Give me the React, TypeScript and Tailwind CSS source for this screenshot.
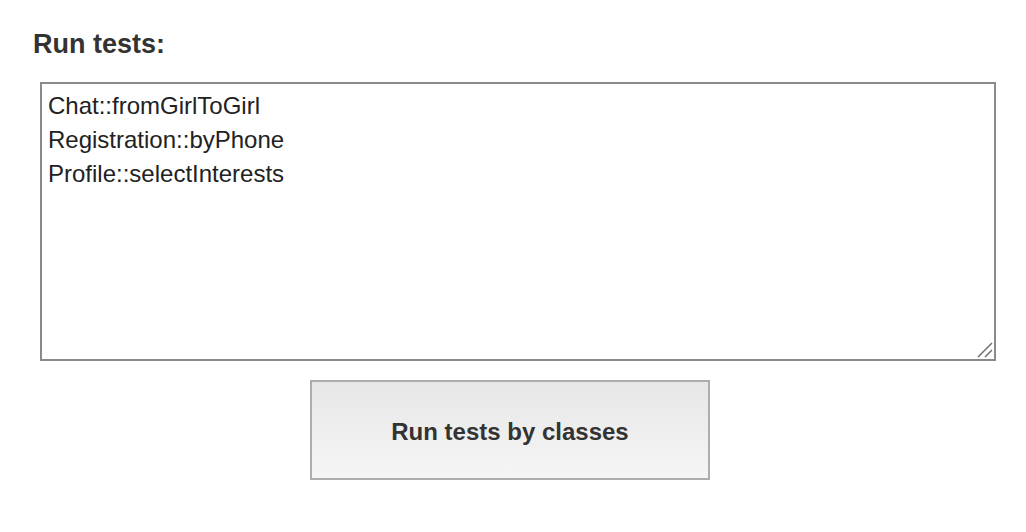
import React from "react";

const tests = ["Chat::fromGirlToGirl", "Registration::byPhone", "Profile::selectInterests"];

export default function App() {
  return (
    <div className="min-h-[532px] w-[1026px] bg-white font-['Liberation_Sans',Arial,sans-serif] text-[#333]">
      <div className="px-[33px] pt-[27px]">
        <h2 className="text-[27px] font-bold leading-[34px]">Run tests:</h2>
      </div>
      <div className="mt-[21px] pl-[40px]">
        <div className="relative h-[279px] w-[956px]">
          <textarea
            readOnly
            defaultValue={tests.join("\n")}
            className="block h-full w-full resize-none border-2 border-[#8a8a8a] bg-white px-[6px] pt-[5px] text-[24px] leading-[34px] text-[#222] outline-none"
          />
          {/* resize grip */}
          <svg className="pointer-events-none absolute bottom-[3px] right-[3px]" width="16" height="16" viewBox="0 0 16 16">
            <line x1="1" y1="15" x2="15" y2="1" stroke="#6b6b6b" strokeWidth="1.5" />
            <line x1="8" y1="15" x2="15" y2="8" stroke="#6b6b6b" strokeWidth="1.5" />
          </svg>
        </div>
      </div>
      <div className="mt-[19px] pl-[310px]">
        <button className="flex h-[100px] w-[400px] items-center justify-center border-2 border-[#adadad] bg-gradient-to-b from-[#e7e7e7] to-[#f5f5f5] pt-[4px] text-[24px] font-bold text-[#333]">
          Run tests by classes
        </button>
      </div>
    </div>
  );
}
